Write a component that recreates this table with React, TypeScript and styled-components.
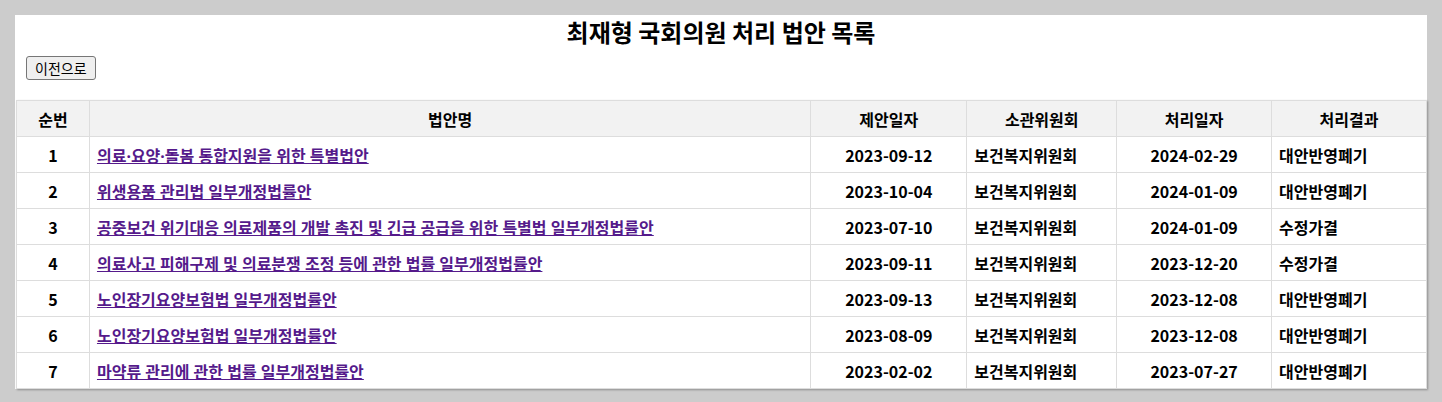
import React from 'react';
import styled, {createGlobalStyle} from 'styled-components';

const GlobalStyles = createGlobalStyle`
  body {
    margin: 0;
    padding: 15px;
    background-color: #ccc;
    font-family: "Noto Sans CJK KR", "Noto Sans", sans-serif;
  }
`

const Container = styled.div`
  background-color: #fff;
`

const Title = styled.h1`
  margin: 0;
  font-size: 24px;
  line-height: 34px;
  font-weight: bold;
  text-align: center;
  color: #000;
`

const BackButton = styled.button`
  display: block;
  margin: 7px 0 0 11px;
  height: 24px;
  padding: 0 8px;
  font-family: "Noto Sans CJK KR", sans-serif;
  font-size: 14px;
  color: #000;
  background-color: #efefef;
  border: 1px solid #767676;
  border-radius: 3px;
  cursor: pointer;
`

const Table = styled.table`
  width: calc(100% - 1px);
  margin: 20px 0 0 1px;
  border-collapse: collapse;
  box-shadow: 1px 1px 2px rgba(0, 0, 0, 0.3);
  font-size: 16px;
  font-weight: bold;
`

const Th = styled.th<{ width: number }>`
  width: ${({width}) => width}px;
  height: 36px;
  padding: 0 7px;
  background-color: #f2f2f2;
  border: 1px solid #ddd;
  text-align: center;
  box-sizing: border-box;
`

const Td = styled.td<{ align?: string }>`
  height: 36px;
  padding: 0 7px;
  border: 1px solid #ddd;
  text-align: ${({align}) => align || 'center'};
  box-sizing: border-box;
`

const BillLink = styled.a`
  font-family: "Noto Sans", "Noto Sans CJK KR", sans-serif;
  color: #551a8b;
  text-decoration: underline;
`

const columns = [
  {title: '순번', width: 73},
  {title: '법안명', width: 722},
  {title: '제안일자', width: 156},
  {title: '소관위원회', width: 150},
  {title: '처리일자', width: 155},
  {title: '처리결과', width: 155},
]

const bills = [
  {name: '의료·요양·돌봄 통합지원을 위한 특별법안', proposed: '2023-09-12', processed: '2024-02-29', result: '대안반영폐기'},
  {name: '위생용품 관리법 일부개정법률안', proposed: '2023-10-04', processed: '2024-01-09', result: '대안반영폐기'},
  {name: '공중보건 위기대응 의료제품의 개발 촉진 및 긴급 공급을 위한 특별법 일부개정법률안', proposed: '2023-07-10', processed: '2024-01-09', result: '수정가결'},
  {name: '의료사고 피해구제 및 의료분쟁 조정 등에 관한 법률 일부개정법률안', proposed: '2023-09-11', processed: '2023-12-20', result: '수정가결'},
  {name: '노인장기요양보험법 일부개정법률안', proposed: '2023-09-13', processed: '2023-12-08', result: '대안반영폐기'},
  {name: '노인장기요양보험법 일부개정법률안', proposed: '2023-08-09', processed: '2023-12-08', result: '대안반영폐기'},
  {name: '마약류 관리에 관한 법률 일부개정법률안', proposed: '2023-02-02', processed: '2023-07-27', result: '대안반영폐기'},
]

function App() {
  return (
    <Container>
      <GlobalStyles/>
      <Title>최재형 국회의원 처리 법안 목록</Title>
      <BackButton>이전으로</BackButton>
      <Table>
        <thead>
          <tr>
            {columns.map(col => <Th key={col.title} width={col.width}>{col.title}</Th>)}
          </tr>
        </thead>
        <tbody>
          {bills.map((bill, i) => (
            <tr key={i}>
              <Td>{i + 1}</Td>
              <Td align="left"><BillLink href="#">{bill.name}</BillLink></Td>
              <Td>{bill.proposed}</Td>
              <Td align="left">보건복지위원회</Td>
              <Td>{bill.processed}</Td>
              <Td align="left">{bill.result}</Td>
            </tr>
          ))}
        </tbody>
      </Table>
    </Container>
  );
}

export default App;
